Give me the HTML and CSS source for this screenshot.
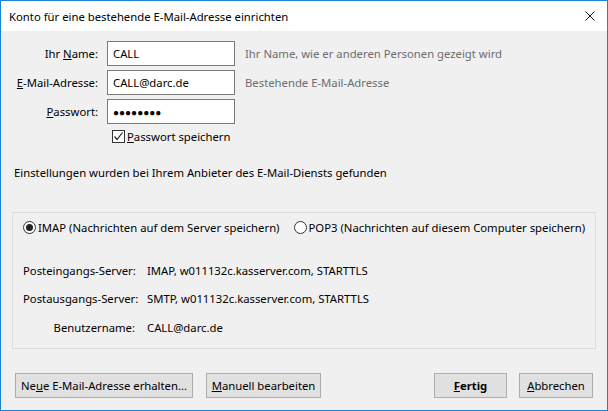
FILE: index.html
```html
<!DOCTYPE html>
<html lang="de">
<head>
<meta charset="utf-8">
<title>Konto einrichten</title>
<link rel="stylesheet" href="styles.css">
</head>
<body>
<div class="window">
  <div class="titlebar">
    <span class="title">Konto für eine bestehende E-Mail-Adresse einrichten</span>
    <svg class="close" width="10" height="10" viewBox="0 0 10 10"><path d="M0.5 0.5 L9.5 9.5 M9.5 0.5 L0.5 9.5" stroke="#111" stroke-width="1" fill="none"/></svg>
  </div>
  <div class="content">
    <div class="form">
      <label class="lbl">Ihr <u>N</u>ame:</label>
      <div class="input">CALL</div>
      <span class="hint">Ihr Name, wie er anderen Personen gezeigt wird</span>

      <label class="lbl"><u>E</u>-Mail-Adresse:</label>
      <div class="input">CALL@darc.de</div>
      <span class="hint">Bestehende E-Mail-Adresse</span>

      <label class="lbl"><u>P</u>asswort:</label>
      <div class="input pw">●●●●●●●●</div>
      <span></span>

      <span></span>
      <div class="check">
        <span class="box"><svg width="11" height="11" viewBox="0 0 11 11"><path d="M1.5 5.5 L4 8.5 L9.5 1.5" stroke="#222" stroke-width="1.2" fill="none"/></svg></span>
        <span><u>P</u>asswort speichern</span>
      </div>
    </div>

    <p class="found">Einstellungen wurden bei Ihrem Anbieter des E-Mail-Diensts gefunden</p>

    <div class="group">
      <div class="radios">
        <div class="radio"><span class="circle on"></span><span>IMAP (Nachrichten auf dem Server speichern)</span></div>
        <div class="radio"><span class="circle"></span><span>POP3 (Nachrichten auf diesem Computer speichern)</span></div>
      </div>
      <div class="servers">
        <span class="slbl">Posteingangs-Server:</span><span>IMAP, w011132c.kasserver.com, STARTTLS</span>
        <span class="slbl">Postausgangs-Server:</span><span>SMTP, w011132c.kasserver.com, STARTTLS</span>
        <span class="slbl">Benutzername:</span><span>CALL@darc.de</span>
      </div>
    </div>

    <div class="buttons">
      <button class="btn b-new">Ne<u>u</u>e E-Mail-Adresse erhalten...</button>
      <button class="btn b-man"><u>M</u>anuell bearbeiten</button>
      <span class="spacer"></span>
      <button class="btn b-ok"><u>F</u>ertig</button>
      <button class="btn b-cancel"><u>A</u>bbrechen</button>
    </div>
  </div>
</div>
</body>
</html>
```
FILE: styles.css
```css
* { box-sizing: border-box; }
html, body { margin: 0; padding: 0; background: #f0f0f0; }
body {
  font-family: "Noto Sans", "Liberation Sans", sans-serif;
  font-size: 11.3px;
  color: #000;
  white-space: nowrap;
}
.window {
  width: 608px;
  height: 411px;
  border: 1px solid #1883d7;
  display: flex;
  flex-direction: column;
  background: #f0f0f0;
  overflow: hidden;
}
.titlebar {
  flex-shrink: 0;
  height: 30px;
  background: #fff;
  display: flex;
  align-items: center;
  padding-left: 8px;
  padding-right: 12px;
}
.title { flex: 1; }
.close { display: block; }
.content {
  flex: 1;
  display: flex;
  flex-direction: column;
}
.form {
  margin-top: 10px;
  display: grid;
  grid-template-columns: 97px 128px 1fr;
  column-gap: 9px;
  row-gap: 4px;
  align-items: center;
}
.lbl { text-align: right; }
.input {
  height: 25px;
  border: 1px solid #7a7a7a;
  background: #fff;
  padding: 0 5px;
  display: flex;
  align-items: center;
}
.pw { font-size: 10px; }
.hint { color: #6d6d6d; margin-left: 1px; }
.check {
  display: flex;
  align-items: center;
  gap: 2px;
  padding-left: 5px;
  height: 16px;
}
.box {
  width: 13px; height: 13px;
  border: 1px solid #333;
  background: #fff;
  display: flex;
  align-items: center;
  justify-content: center;
  flex-shrink: 0;
}
.box svg { display: block; }
.found { margin: 21px 0 0 13px; line-height: 16px; }
.group {
  flex-shrink: 0;
  margin: 31px 11px 0 11px;
  border: 1px solid #dcdcdc;
  height: 137px;
  padding: 6px 10px 0 10px;
}
.radios { display: flex; gap: 14px; height: 16px; }
.radio { display: flex; align-items: center; gap: 2px; }
.circle {
  flex-shrink: 0;
  width: 13px; height: 13px;
  border: 1px solid #333;
  border-radius: 50%;
  background: #fff;
  display: flex; align-items: center; justify-content: center;
}
.circle.on::after {
  content: "";
  width: 7px; height: 7px; border-radius: 50%; background: #222;
}
.servers {
  margin-top: 27px;
  display: grid;
  grid-template-columns: 112px auto;
  grid-auto-rows: 16px;
  align-items: center;
  column-gap: 12px;
  row-gap: 12.5px;
}
.slbl { text-align: right; }
.buttons {
  flex-shrink: 0;
  display: flex;
  margin: 24px 14px 0 14px;
  gap: 12px;
}
.spacer { flex: 1; }
.btn {
  font: inherit;
  height: 25px;
  background: #e1e1e1;
  border: 1px solid #adadad;
  padding: 0;
  color: #000;
  white-space: nowrap;
}
.b-new { width: 178px; }
.b-man { width: 115px; margin-left: 1px; }
.b-ok { width: 73px; font-weight: bold; }
.b-cancel { width: 74px; }
```
